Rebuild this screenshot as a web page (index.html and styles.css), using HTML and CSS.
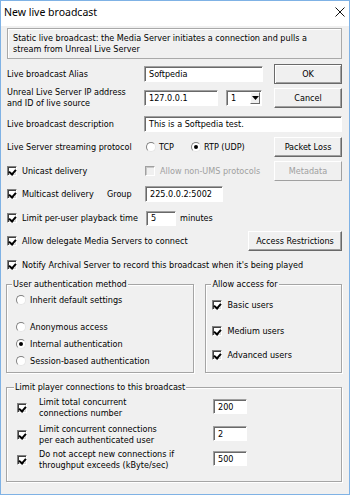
FILE: index.html
```html
<!DOCTYPE html>
<html lang="en">
<head>
    <meta charset="UTF-8">
    <title>New live broadcast</title>
    <link rel="stylesheet" href="styles.css">
</head>
<body>
    <div class="window">
        <div class="titlebar">
            <span class="title">New live broadcast</span>
            <svg class="close" width="10" height="10" viewBox="0 0 10 10">
                <path d="M0.5 0.5 L9.5 9.5 M9.5 0.5 L0.5 9.5" stroke="#111" stroke-width="1" fill="none"/>
            </svg>
        </div>

        <div class="content">
            <div class="note">Static live broadcast: the Media Server initiates a connection and pulls a stream from Unreal Live Server</div>

            <div class="row r-alias">
                <span class="lbl">Live broadcast Alias</span>
                <span class="field w-alias">Softpedia</span>
                <span class="btn default">OK</span>
            </div>

            <div class="row r-ip">
                <span class="lbl two">Unreal Live Server IP address<br>and ID of live source</span>
                <span class="field w-ip">127.0.0.1</span>
                <span class="field select">1<span class="drop"><svg width="7" height="4" viewBox="0 0 7 4"><path d="M0 0 H7 L3.5 4 Z" fill="#000"/></svg></span></span>
                <span class="btn">Cancel</span>
            </div>

            <div class="row r-desc">
                <span class="lbl">Live broadcast description</span>
                <span class="field w-desc">This is a Softpedia test.</span>
            </div>

            <div class="row r-proto">
                <span class="lbl lbl-proto">Live Server streaming protocol</span>
                <span class="opt opt-tcp"><span class="radio"></span>TCP</span>
                <span class="opt"><span class="radio on"></span>RTP (UDP)</span>
                <span class="btn">Packet Loss</span>
            </div>

            <div class="row r-uni">
                <span class="opt opt-uni"><span class="cb on"></span>Unicast delivery</span>
                <span class="opt disabled"><span class="cb"></span>Allow non-UMS protocols</span>
                <span class="btn disabled">Metadata</span>
            </div>

            <div class="row r-multi">
                <span class="opt opt-multi"><span class="cb on"></span>Multicast delivery</span>
                <span class="group-lbl">Group</span>
                <span class="field w-group">225.0.0.2:5002</span>
            </div>

            <div class="row r-limit">
                <span class="opt opt-limit"><span class="cb on"></span>Limit per-user playback time</span>
                <span class="field w-min">5</span>
                <span class="unit">minutes</span>
            </div>

            <div class="row r-deleg">
                <span class="opt"><span class="cb on"></span>Allow delegate Media Servers to connect</span>
                <span class="btn w-access">Access Restrictions</span>
            </div>

            <div class="row r-notify">
                <span class="opt"><span class="cb on"></span>Notify Archival Server to record this broadcast when it's being played</span>
            </div>

            <div class="groups">
                <div class="box box-auth">
                    <span class="legend">User authentication method</span>
                    <span class="opt item i-inherit"><span class="radio"></span>Inherit default settings</span>
                    <span class="opt item i-anon"><span class="radio"></span>Anonymous access</span>
                    <span class="opt item i-next"><span class="radio on"></span>Internal authentication</span>
                    <span class="opt item i-next"><span class="radio"></span>Session-based authentication</span>
                </div>
                <div class="box box-users">
                    <span class="legend">Allow access for</span>
                    <span class="opt item u-basic"><span class="cb on"></span>Basic users</span>
                    <span class="opt item u-medium"><span class="cb on"></span>Medium users</span>
                    <span class="opt item u-adv"><span class="cb on"></span>Advanced users</span>
                </div>
            </div>

            <div class="box box-limits">
                <span class="legend">Limit player connections to this broadcast</span>
                <div class="lim l-first">
                    <span class="cb on"></span>
                    <span class="lim-text">Limit total concurrent<br>connections number</span>
                    <span class="field w-num">200</span>
                </div>
                <div class="lim">
                    <span class="cb on"></span>
                    <span class="lim-text">Limit concurrent connections<br>per each authenticated user</span>
                    <span class="field w-num">2</span>
                </div>
                <div class="lim l-last">
                    <span class="cb on"></span>
                    <span class="lim-text">Do not accept new connections if<br>throughput exceeds (kByte/sec)</span>
                    <span class="field w-num">500</span>
                </div>
            </div>
        </div>
    </div>
</body>
</html>
```

FILE: styles.css
```css
* {
    margin: 0;
    padding: 0;
    box-sizing: border-box;
}

body {
    background: #f0f0f0;
    font-family: 'DejaVu Sans Condensed', 'Liberation Sans', sans-serif;
    font-size: 9px;
    color: #000;
}

.window {
    width: 350px;
    height: 495px;
    border: 1px solid #7fb2e5;
    background: #f0f0f0;
    overflow: hidden;
}

.titlebar {
    height: 25px;
    background: #fff;
    display: flex;
    align-items: center;
    justify-content: space-between;
    padding: 0 4px 4px 3px;
}

.title {
    font-family: 'Noto Sans', 'Open Sans', sans-serif;
    font-size: 10.5px;
}

.close {
    margin-right: 0;
}

.content {
    padding: 2px 7px 0 6px;
}

.note {
    height: 31px;
    border: 1px solid #a9a9a9;
    box-shadow: inset 1px 1px #fff;
    padding: 4px 5px;
    line-height: 11px;
}

/* rows of the top form */
.row {
    display: flex;
    align-items: center;
    height: 20px;
    margin-top: 4px;
    white-space: nowrap;
}

.r-alias { margin-top: 5px; }
.r-desc { height: 18px; margin-top: 7px; }
.r-multi { height: 18px; }
.r-limit { height: 18px; margin-top: 6px; }
.r-deleg { margin-top: 4px; }
.r-notify { height: 18px; margin-top: 5px; }

.lbl {
    width: 137px;
    flex: none;
}

.lbl.two {
    line-height: 11px;
}

.lbl-proto {
    width: 139px;
}

.field {
    display: flex;
    align-items: center;
    height: 16px;
    background: #fff;
    border: 1px solid;
    border-color: #a0a0a0 #fff #fff #a0a0a0;
    box-shadow: inset 1px 1px #696969;
    padding-left: 4px;
    flex: none;
}

.w-alias { width: 119px; }
.w-ip { width: 74px; }
.w-desc { flex: 1; }
.w-group { width: 78px; }
.w-min { width: 30px; height: 15px; }
.w-num { width: 34px; height: 15px; }

.select {
    width: 36px;
    margin-left: 8px;
    position: relative;
}

.drop {
    position: absolute;
    right: 1px;
    top: 1px;
    width: 10px;
    height: 12px;
    background: #f0f0f0;
    border: 1px solid;
    border-color: #fff #696969 #696969 #fff;
    display: flex;
    align-items: center;
    justify-content: center;
}

.btn {
    margin-left: auto;
    width: 68px;
    height: 20px;
    display: flex;
    align-items: center;
    justify-content: center;
    background: #f0f0f0;
    border: 1px solid;
    border-color: #fff #696969 #696969 #fff;
    box-shadow: inset -1px -1px #a0a0a0;
    flex: none;
}

.btn.default {
    border-color: #6a6a6a;
    box-shadow: inset 1px 1px #fff, inset -1px -1px #a0a0a0;
}

.btn.disabled {
    color: #a0a0a0;
    border-color: #fff #a0a0a0 #a0a0a0 #fff;
    box-shadow: none;
}

.w-access { width: 94px; }

/* check boxes and radios */
.opt {
    display: flex;
    align-items: center;
    flex: none;
}

.opt.disabled { color: #a0a0a0; }

.opt-tcp { width: 45px; }
.opt-uni { width: 138px; }
.opt-multi { width: 100px; }
.opt-limit { width: 139px; }

.cb {
    width: 10px;
    height: 10px;
    flex: none;
    margin-right: 5px;
    background: #fff;
    border: 1px solid;
    border-color: #808080 #fff #fff #808080;
    box-shadow: inset 1px 1px #404040, inset -1px -1px #d8d8d8;
    position: relative;
}

.cb.on::after {
    content: '';
    position: absolute;
    left: 2px;
    top: 1px;
    width: 3px;
    height: 5px;
    border: solid #000;
    border-width: 0 2px 2px 0;
    transform: rotate(40deg);
}

.opt.disabled .cb {
    background: #f0f0f0;
    border-color: #a0a0a0 #fff #fff #a0a0a0;
    box-shadow: inset 1px 1px #c8c8c8;
}

.radio {
    width: 10px;
    height: 10px;
    flex: none;
    margin-right: 3px;
    border-radius: 50%;
    background: #fff;
    border: 1px solid;
    border-color: #808080 #e6e6e6 #e6e6e6 #808080;
    display: flex;
    align-items: center;
    justify-content: center;
}

.radio.on::after {
    content: '';
    width: 4px;
    height: 4px;
    border-radius: 50%;
    background: #000;
}

.group-lbl { width: 38px; }
.unit { margin-left: 4px; }

/* group boxes */
.box {
    border: 1px solid #a5a5a5;
    box-shadow: inset 1px 1px #fff, 1px 1px #fff;
    display: flex;
    flex-direction: column;
    align-items: flex-start;
}

.legend {
    line-height: 12px;
    margin: -7px 0 0 5px;
    padding: 0 1px;
    background: #f0f0f0;
}

.groups {
    display: flex;
    gap: 11px;
    margin: 10px 0 0 -1px;
    height: 89px;
}

.box-auth {
    width: 189px;
    padding-left: 9px;
}

.box-auth .legend { margin-left: -4px; }

.item {
    height: 14px;
    margin-top: 3px;
}

.i-inherit { margin-top: 3px; }
.i-anon { margin-top: 13px; }
.box-auth .radio { margin-right: 4px; }

.box-users {
    width: 137px;
    padding-left: 6px;
}

.box-users .legend { margin-left: -1px; }
.u-basic { margin-top: 8px; }
.u-medium { margin-top: 12px; }
.u-adv { margin-top: 10px; }

.box-limits {
    margin: 14px 0 0 -1px;
    width: 336px;
    height: 95px;
    padding-left: 10px;
}

.box-limits .legend { margin-left: -3px; }

.lim {
    display: flex;
    align-items: center;
    height: 24px;
    margin-top: 3px;
}

.l-last { margin-top: 1px; }

.lim .cb { margin-right: 12px; }

.lim-text {
    width: 174px;
    line-height: 11px;
}

.w-num { margin-top: -3px; }
```
